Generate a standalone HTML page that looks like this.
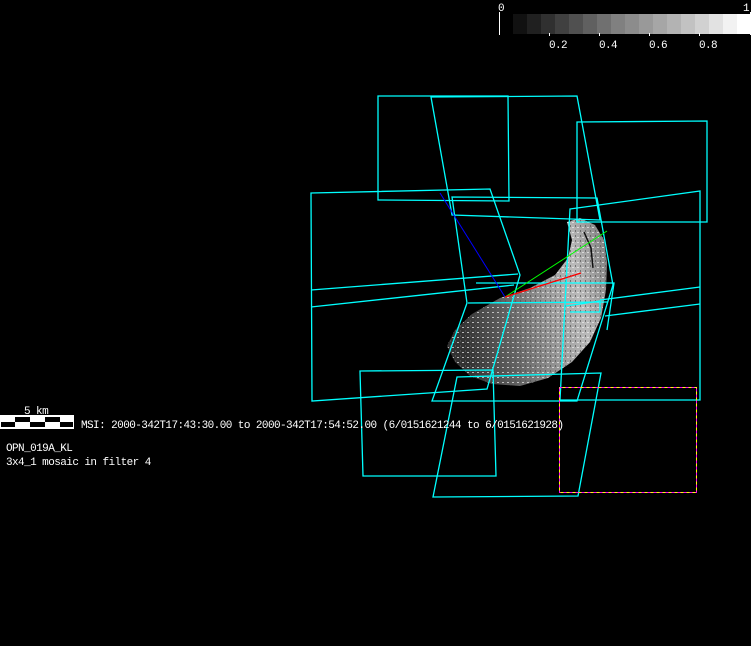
<!DOCTYPE html>
<html><head><meta charset="utf-8"><style>
html,body{margin:0;padding:0;background:#000;width:751px;height:646px;overflow:hidden}
svg{position:absolute;left:0;top:0}
text{font-family:"Liberation Mono","DejaVu Sans Mono",monospace;font-size:11px;fill:#fff;letter-spacing:-0.57px}
</style></head><body>
<svg width="751" height="646" viewBox="0 0 751 646">
<defs>
<linearGradient id="ag" x1="0" y1="0.2" x2="1" y2="0">
<stop offset="0" stop-color="#333"/><stop offset="0.3" stop-color="#666"/>
<stop offset="0.55" stop-color="#999"/><stop offset="0.75" stop-color="#bbb"/><stop offset="1" stop-color="#777"/>
</linearGradient>
<pattern id="dots" width="5" height="5" patternUnits="userSpaceOnUse">
<rect x="0" y="0" width="1" height="2" fill="#555"/><rect x="2" y="2" width="2" height="1" fill="#eee"/>
</pattern>
</defs>
<path d="M567,222 L580,218 L595,225 L604,240 L607,262 L606,290 L601,318 L590,342 L572,362 L548,378 L520,386 L492,384 L470,376 L455,362 L447,346 L455,330 L472,314 L500,298 L530,288 L555,275 L568,258 L572,240 Z" fill="url(#ag)"/>
<path d="M567,222 L580,218 L595,225 L604,240 L607,262 L606,290 L601,318 L590,342 L572,362 L548,378 L520,386 L492,384 L470,376 L455,362 L447,346 L455,330 L472,314 L500,298 L530,288 L555,275 L568,258 L572,240 Z" fill="url(#dots)" opacity="0.7"/>
<path d="M584,232 L591,248 L593,268" stroke="#111" stroke-width="1.5" fill="none"/>
<g fill="none" stroke="#0ff" stroke-width="1.3">
<polygon points="378,96 508,96 509,201 378,200"/>
<polygon points="431,97 577,96 600,220 452,215"/>
<polygon points="452,197 597,198 613,285 577,401 432,401 467,303"/>
<polygon points="577,122 707,121 707,222 577,222"/>
<polygon points="570,209 700,191 700,400 560,400"/>
<polygon points="311,193 490,189 520,275 487,389 312,401"/>
<polyline points="311,290 518,274"/>
<polyline points="311,307 514,285"/>
<polyline points="468,303 608,302"/>
<polyline points="476,283 614,283 607,330"/>
<polyline points="600,300 700,287"/>
<polyline points="605,316 700,304"/>
<polyline points="566,306 600,301 600,312 570,312"/>
<polygon points="360,371 493,370 496,476 363,476"/>
<polygon points="457,377 601,373 578,496 433,497"/>
</g>
<rect x="559.5" y="387.5" width="137" height="105" fill="none" stroke="#ff0" stroke-width="1"/>
<rect x="559.5" y="387.5" width="137" height="105" fill="none" stroke="#f0f" stroke-width="1" stroke-dasharray="3,3"/>
<line x1="440" y1="193" x2="505" y2="297" stroke="#00f" stroke-width="1"/>
<line x1="505" y1="297" x2="607" y2="231" stroke="#0f0" stroke-width="1"/>
<line x1="505" y1="297" x2="581" y2="273" stroke="#f00" stroke-width="1.3"/>
<g>
<rect x="513" y="14" width="14" height="20" fill="#111"/><rect x="527" y="14" width="14" height="20" fill="#202020"/>
<rect x="541" y="14" width="14" height="20" fill="#303030"/><rect x="555" y="14" width="14" height="20" fill="#404040"/>
<rect x="569" y="14" width="14" height="20" fill="#505050"/><rect x="583" y="14" width="14" height="20" fill="#606060"/>
<rect x="597" y="14" width="14" height="20" fill="#707070"/><rect x="611" y="14" width="14" height="20" fill="#808080"/>
<rect x="625" y="14" width="14" height="20" fill="#8c8c8c"/><rect x="639" y="14" width="14" height="20" fill="#999"/>
<rect x="653" y="14" width="14" height="20" fill="#a6a6a6"/><rect x="667" y="14" width="14" height="20" fill="#b3b3b3"/>
<rect x="681" y="14" width="14" height="20" fill="#c2c2c2"/><rect x="695" y="14" width="14" height="20" fill="#d1d1d1"/>
<rect x="709" y="14" width="14" height="20" fill="#e2e2e2"/><rect x="723" y="14" width="14" height="20" fill="#f2f2f2"/>
<rect x="737" y="14" width="13" height="20" fill="#fff"/>
<line x1="499.5" y1="12" x2="499.5" y2="35" stroke="#fff"/>
<line x1="750.5" y1="12" x2="750.5" y2="35" stroke="#fff"/>
<line x1="549.5" y1="33" x2="549.5" y2="36" stroke="#fff"/><line x1="599.5" y1="33" x2="599.5" y2="36" stroke="#fff"/>
<line x1="649.5" y1="33" x2="649.5" y2="36" stroke="#fff"/><line x1="699.5" y1="33" x2="699.5" y2="36" stroke="#fff"/>
<text x="498" y="11">0</text><text x="743" y="11">1</text>
<text x="549" y="48">0.2</text><text x="599" y="48">0.4</text><text x="649" y="48">0.6</text><text x="699" y="48">0.8</text>
</g>
<rect x="0" y="415" width="74" height="14" fill="#fff"/>
<g fill="#000">
<rect x="15" y="417" width="15" height="5"/><rect x="45" y="417" width="15" height="5"/>
<rect x="1" y="422" width="14" height="5"/><rect x="30" y="422" width="15" height="5"/><rect x="60" y="422" width="13" height="5"/>
</g>
<text x="24" y="414">5 km</text>
<text x="81" y="428">MSI:  2000-342T17:43:30.00 to 2000-342T17:54:52.00 (6/0151621244 to 6/0151621928)</text>
<text x="6" y="451">OPN_019A_KL</text>
<text x="6" y="465">3x4_1 mosaic in filter 4</text>
</svg>
</body></html>
